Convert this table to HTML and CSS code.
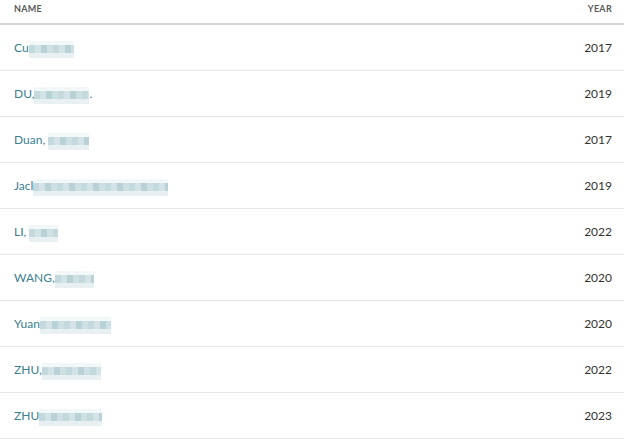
FILE: index.html
```html
<!DOCTYPE html>
<html>
<head>
<meta charset="utf-8">
<link rel="stylesheet" href="styles.css">
</head>
<body>
<table class="list">
  <thead>
    <tr><th class="name-col">NAME</th><th class="year-col">YEAR</th></tr>
  </thead>
  <tbody>
    <tr><td class="name">Cu<span class="redact" style="width:45px"></span></td><td class="year">2017</td></tr>
    <tr><td class="name">DU,<span class="redact" style="width:55px"></span>.</td><td class="year">2019</td></tr>
    <tr><td class="name">Duan, <span class="redact" style="width:41px"></span></td><td class="year">2017</td></tr>
    <tr><td class="name">Jacl<span class="redact" style="width:135px"></span></td><td class="year">2019</td></tr>
    <tr><td class="name">LI, <span class="redact" style="width:29px"></span></td><td class="year">2022</td></tr>
    <tr><td class="name">WANG,<span class="redact" style="width:39px"></span></td><td class="year">2020</td></tr>
    <tr><td class="name">Yuan<span class="redact" style="width:71px"></span></td><td class="year">2020</td></tr>
    <tr><td class="name">ZHU,<span class="redact" style="width:59px"></span></td><td class="year">2022</td></tr>
    <tr><td class="name">ZHU<span class="redact" style="width:63px"></span></td><td class="year">2023</td></tr>
  </tbody>
</table>
</body>
</html>
```
FILE: styles.css
```css
html, body {
  margin: 0;
  padding: 0;
  background: #fff;
}
body {
  font-family: Lato, "Open Sans", sans-serif;
}
.list {
  width: 624px;
  border-collapse: collapse;
}
.list th {
  font-size: 9px;
  font-weight: 700;
  color: #5a5a5a;
  letter-spacing: 0.3px;
  height: 24px;
  padding: 3px 12px 0 14px;
  vertical-align: top;
  box-sizing: border-box;
  border-bottom: 2px solid #d4d4d4;
}
.list th.name-col { text-align: left; }
.list th.year-col { text-align: right; }
.list td {
  height: 46px;
  box-sizing: border-box;
  border-bottom: 1px solid #e6e6e6;
  padding: 0 12px 0 14px;
  vertical-align: middle;
}
.name {
  font-size: 12px;
  color: #3a8090;
}
.year {
  font-size: 12px;
  color: #333;
  text-align: right;
}
.redact {
  display: inline-block;
  height: 8px;
  vertical-align: -1px;
  background: repeating-linear-gradient(90deg, #c3d9de 0 6px, #d3e3e7 6px 12px, #b9d2d8 12px 18px, #cde0e4 18px 24px);
  box-shadow: 0 -4px 0 #f2f7f8, 0 5px 0 #e8f0f2;
}
```
